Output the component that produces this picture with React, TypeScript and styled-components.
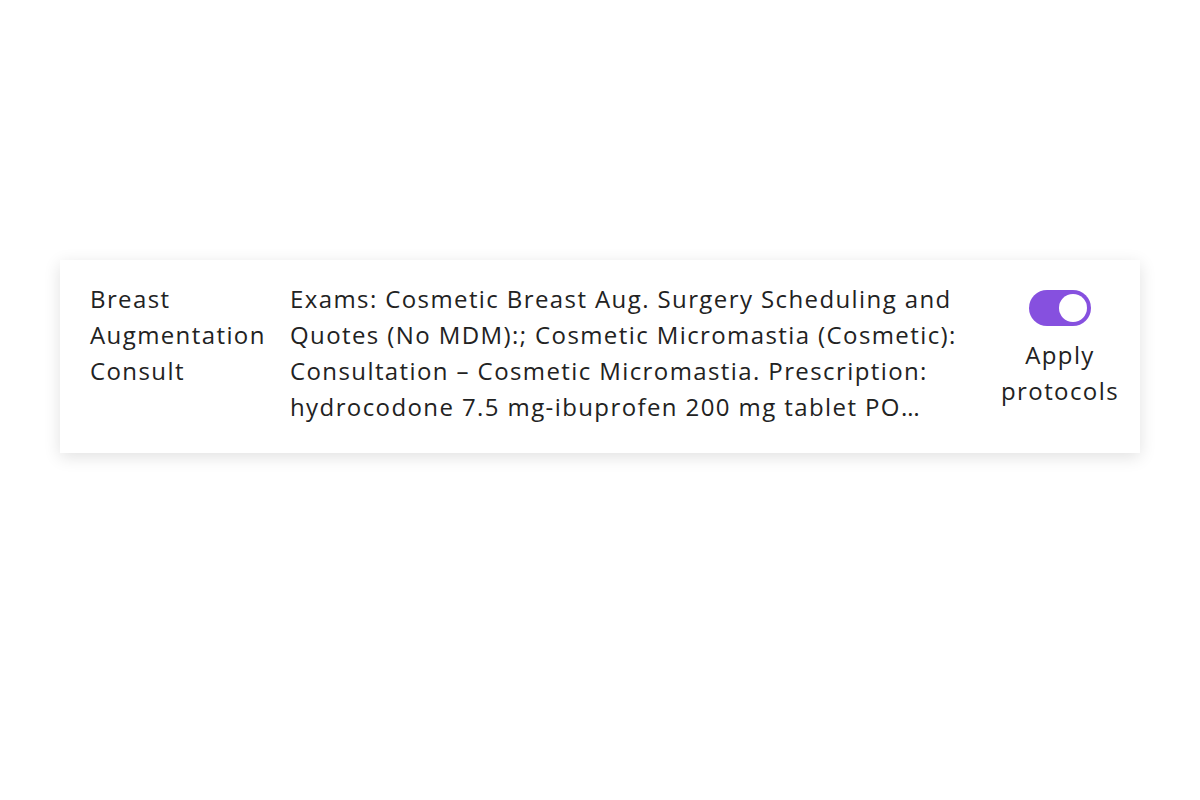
import styled, { createGlobalStyle } from "styled-components"
import { useState } from "react"

const Global = createGlobalStyle`
    html, body {
        margin: 0;
        padding: 0;
        background: #ffffff;
    }
    body {
        font-family: "Open Sans", "Noto Sans", sans-serif;
        color: #222222;
    }
`

const Page = styled.div`
    width: 1200px;
    height: 800px;
    padding: 260px 60px 0;
    box-sizing: border-box;
`

const Card = styled.div`
    display: grid;
    grid-template-columns: 180px 1fr 120px;
    column-gap: 20px;
    align-items: start;
    background: #ffffff;
    padding: 21px 20px 28px 30px;
    box-shadow: 0 4px 16px rgba(0, 0, 0, 0.12);
    font-size: 24px;
    line-height: 36px;
    letter-spacing: 1.4px;
`

const Name = styled.div``

const Details = styled.div`
    display: -webkit-box;
    -webkit-box-orient: vertical;
    -webkit-line-clamp: 4;
    overflow: hidden;
`

const ToggleCell = styled.div`
    display: flex;
    flex-direction: column;
    align-items: center;
    padding-top: 9px;
    gap: 11px;
    text-align: center;
`

const Track = styled.button<{ $on: boolean }>`
    position: relative;
    width: 62px;
    height: 36px;
    border: none;
    border-radius: 18px;
    padding: 0;
    cursor: pointer;
    background: ${(p) => (p.$on ? "#8650df" : "#cfcfd6")};
`

const Knob = styled.span<{ $on: boolean }>`
    position: absolute;
    top: 4px;
    left: ${(p) => (p.$on ? "30px" : "4px")};
    width: 28px;
    height: 28px;
    border-radius: 50%;
    background: #ffffff;
    transition: left 0.15s;
`

const Label = styled.span`
    line-height: 36px;
    white-space: nowrap;
`

const protocolText =
  "Exams: Cosmetic Breast Aug. Surgery Scheduling and Quotes (No MDM):; Cosmetic Micromastia (Cosmetic): Consultation – Cosmetic Micromastia. Prescription: hydrocodone 7.5 mg-ibuprofen 200 mg tablet PO every 4 to 6 hours as needed for pain, dispense 20 tablets, no refills."

const truncate = (text: string, max: number) =>
  text.length > max ? text.slice(0, max).trimEnd() + "…" : text

const App = () => {
  const [on, setOn] = useState(true)
  return (
    <Page>
        <Global />
        <Card>
            <Name>Breast Augmentation Consult</Name>
            <Details>{truncate(protocolText, 198)}</Details>
            <ToggleCell>
                <Track $on={on} onClick={() => setOn(!on)} aria-pressed={on}>
                    <Knob $on={on} />
                </Track>
                <Label>Apply<br />protocols</Label>
            </ToggleCell>
        </Card>
    </Page>
  )
}

export default App
